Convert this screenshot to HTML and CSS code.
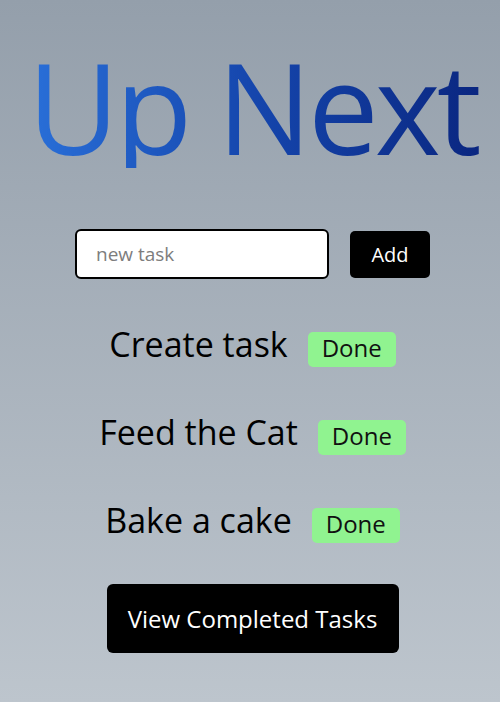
FILE: index.html
```html
<!DOCTYPE html>
<html>
<head>
<meta charset="utf-8">
<link rel="stylesheet" href="styles.css">
</head>
<body>
<main class="app">
  <h1 class="title">Up Next</h1>
  <form class="add-form">
    <input class="task-input" type="text" placeholder="new task">
    <button class="add-btn" type="button">Add</button>
  </form>
  <ul class="task-list">
    <li class="task"><span class="task-name">Create task</span><button class="done-btn" type="button">Done</button></li>
    <li class="task"><span class="task-name">Feed the Cat</span><button class="done-btn" type="button">Done</button></li>
    <li class="task"><span class="task-name">Bake a cake</span><button class="done-btn" type="button">Done</button></li>
  </ul>
  <button class="view-btn" type="button">View Completed Tasks</button>
</main>
</body>
</html>
```
FILE: styles.css
```css
html, body {
  margin: 0;
  height: 100%;
}
body {
  background: linear-gradient(180deg, #949fab 0%, #bdc5cd 100%);
  font-family: "Open Sans", sans-serif;
  color: #000;
  overflow: hidden;
}
.app {
  display: flex;
  flex-direction: column;
  align-items: center;
  padding: 44px 0 0 5px;
}
.title {
  margin: 0;
  font-size: 126px;
  line-height: 124px;
  font-weight: 400;
  letter-spacing: -4px;
  background: linear-gradient(90deg, #2a70d9 0%, #1546ad 50%, #0a2680 100%);
  -webkit-background-clip: text;
  background-clip: text;
  color: transparent;
  padding: 0 4px;
}
.add-form {
  margin: 61px 0 0;
  display: flex;
  align-items: center;
  gap: 21px;
}
.task-input {
  box-sizing: border-box;
  width: 254px;
  height: 50px;
  border: 2px solid #000;
  border-radius: 6px;
  padding: 0 19px;
  font-family: "Open Sans", sans-serif;
  font-size: 19px;
  background: #fff;
  outline: none;
}
.task-input::placeholder {
  color: #7d7d7d;
}
.add-btn {
  box-sizing: border-box;
  width: 80px;
  height: 47px;
  border: none;
  border-radius: 5px;
  background: #000;
  color: #fff;
  font-family: "Open Sans", sans-serif;
  font-size: 20px;
  font-weight: 500;
  padding: 0;
}
.task-list {
  list-style: none;
  margin: 53px 0 0;
  padding: 0;
  display: flex;
  flex-direction: column;
  align-items: center;
  gap: 53px;
}
.task {
  display: flex;
  align-items: center;
  gap: 20px;
  height: 35px;
}
.task-name {
  font-size: 34px;
  line-height: 35px;
  position: relative;
  top: -5px;
}
.done-btn {
  box-sizing: border-box;
  width: 88px;
  height: 35px;
  border: none;
  border-radius: 5px;
  background: #90f390;
  color: #111;
  font-family: "Open Sans", sans-serif;
  font-size: 24px;
  line-height: 31px;
  padding: 0 0 4px;
}
.view-btn {
  margin-top: 41px;
  box-sizing: border-box;
  width: 292px;
  height: 69px;
  border: none;
  border-radius: 6px;
  background: #000;
  color: #fff;
  font-family: "Open Sans", sans-serif;
  font-size: 24px;
  font-weight: 500;
  padding: 0;
}
```
